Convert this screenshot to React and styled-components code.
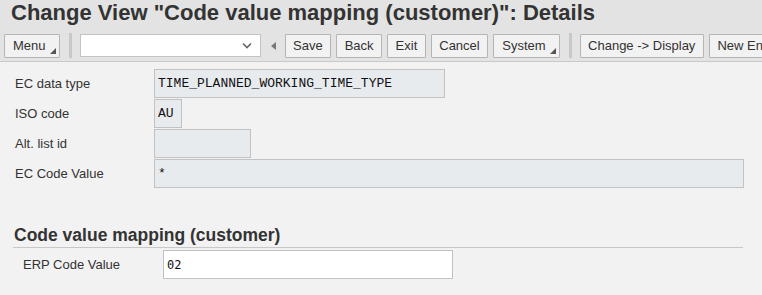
import styled, { createGlobalStyle } from "styled-components";

const Global = createGlobalStyle`
    html, body {
        margin: 0;
        padding: 0;
        background: #f2f2f2;
        font-family: "Liberation Sans", Arial, sans-serif;
        color: #333;
    }
`;

const Pantalla = styled.div`
    width: 762px;
    height: 295px;
    overflow: hidden;
    background: #f2f2f2;
`;

const Cabecera = styled.header`
    background: #e3e3e3;
    border-bottom: 1px solid #c9c9c9;
`;

const Titulo = styled.h1`
    margin: 0;
    height: 29px;
    padding-left: 11px;
    font-size: 22px;
    font-weight: 700;
    line-height: 25px;
    color: #333;
    white-space: nowrap;
`;

const Barra = styled.div`
    height: 32px;
    display: flex;
    align-items: center;
    padding-left: 4px;
    gap: 5px;
    white-space: nowrap;
`;

const Boton = styled.button`
    position: relative;
    flex-shrink: 0;
    height: 24px;
    padding: 0 ${({$menu}) => ($menu ? "13px" : "7.5px")} 0 ${({$menu}) => ($menu ? "8px" : "7.5px")};
    background: #f2f2f2;
    border: 1px solid #b5b5b5;
    border-radius: 1px;
    font-family: "Liberation Sans", Arial, sans-serif;
    font-size: 13px;
    color: #333;
    margin-top: 1px;
    &::after {
        content: "";
        display: ${({$menu}) => ($menu ? "block" : "none")};
        position: absolute;
        right: 3px;
        bottom: 3px;
        border-left: 6px solid transparent;
        border-bottom: 6px solid #555;
    }
`;

const Separador = styled.span`
    flex-shrink: 0;
    width: 3px;
    height: 25px;
    background: #c8c8c8;
    margin: 1px 3px 0 4px;
`;

const Combo = styled.div`
    flex-shrink: 0;
    width: 181px;
    height: 23px;
    margin-top: 1px;
    background: #fff;
    border: 1px solid #c3c3c3;
    display: flex;
    align-items: center;
    justify-content: flex-end;
    padding-right: 8px;
    box-sizing: border-box;
`;

const Flecha = styled.span`
    flex-shrink: 0;
    width: 0;
    height: 0;
    border-top: 4px solid transparent;
    border-bottom: 4px solid transparent;
    border-right: 5px solid #777;
    margin: 1px 4px 0 5px;
`;

const Formulario = styled.div`
    padding: 7px 0 0 15px;
    display: flex;
    flex-direction: column;
    gap: 1px;
`;

const Fila = styled.div`
    display: flex;
    align-items: center;
    height: 29px;
`;

const Etiqueta = styled.label`
    width: ${({$ancho}) => $ancho || "139px"};
    flex-shrink: 0;
    font-size: 13px;
    color: #333;
`;

const Campo = styled.div`
    width: ${({$ancho}) => $ancho};
    height: 29px;
    box-sizing: border-box;
    background: ${({$editable}) => ($editable ? "#fff" : "#e8ebee")};
    border: 1px solid #c2c2c2;
    padding-left: 3px;
    display: flex;
    align-items: center;
    font-family: ${({$editable}) =>
        $editable ? '"DejaVu Sans Mono", monospace' : '"Liberation Mono", "Courier New", monospace'};
    font-size: ${({$editable}) => ($editable ? "12px" : "13px")};
    color: #111;
    white-space: pre;
`;

const Seccion = styled.section`
    margin: 37px 19px 0 13px;
`;

const SeccionTitulo = styled.h2`
    margin: 0;
    padding: 0 0 2px 1px;
    font-size: 17.5px;
    font-weight: 700;
    color: #333;
    border-bottom: 1px solid #c8c8c8;
    line-height: 20px;
    white-space: nowrap;
`;

const SeccionCuerpo = styled.div`
    padding: 2px 0 0 10px;
`;

export default function App() {
    return (
        <Pantalla>
            <Global />
            <Cabecera>
                <Titulo>Change View "Code value mapping (customer)": Details</Titulo>
                <Barra>
                    <Boton $menu>Menu</Boton>
                    <Separador />
                    <Combo>
                        <svg width="10" height="7" viewBox="0 0 10 7">
                            <path d="M1 1.5 L5 5.5 L9 1.5" stroke="#666" strokeWidth="1.6" fill="none" />
                        </svg>
                    </Combo>
                    <Flecha />
                    <Boton>Save</Boton>
                    <Boton>Back</Boton>
                    <Boton>Exit</Boton>
                    <Boton>Cancel</Boton>
                    <Boton $menu>System</Boton>
                    <Separador />
                    <Boton>Change -&gt; Display</Boton>
                    <Boton>New Entries</Boton>
                </Barra>
            </Cabecera>
            <Formulario>
                <Fila>
                    <Etiqueta>EC data type</Etiqueta>
                    <Campo $ancho="291px">TIME_PLANNED_WORKING_TIME_TYPE</Campo>
                </Fila>
                <Fila>
                    <Etiqueta>ISO code</Etiqueta>
                    <Campo $ancho="28px">AU</Campo>
                </Fila>
                <Fila>
                    <Etiqueta>Alt. list id</Etiqueta>
                    <Campo $ancho="97px"></Campo>
                </Fila>
                <Fila>
                    <Etiqueta>EC Code Value</Etiqueta>
                    <Campo $ancho="590px">*</Campo>
                </Fila>
            </Formulario>
            <Seccion>
                <SeccionTitulo>Code value mapping (customer)</SeccionTitulo>
                <SeccionCuerpo>
                    <Fila>
                        <Etiqueta $ancho="140px">ERP Code Value</Etiqueta>
                        <Campo $ancho="290px" $editable>02</Campo>
                    </Fila>
                </SeccionCuerpo>
            </Seccion>
        </Pantalla>
    );
}
